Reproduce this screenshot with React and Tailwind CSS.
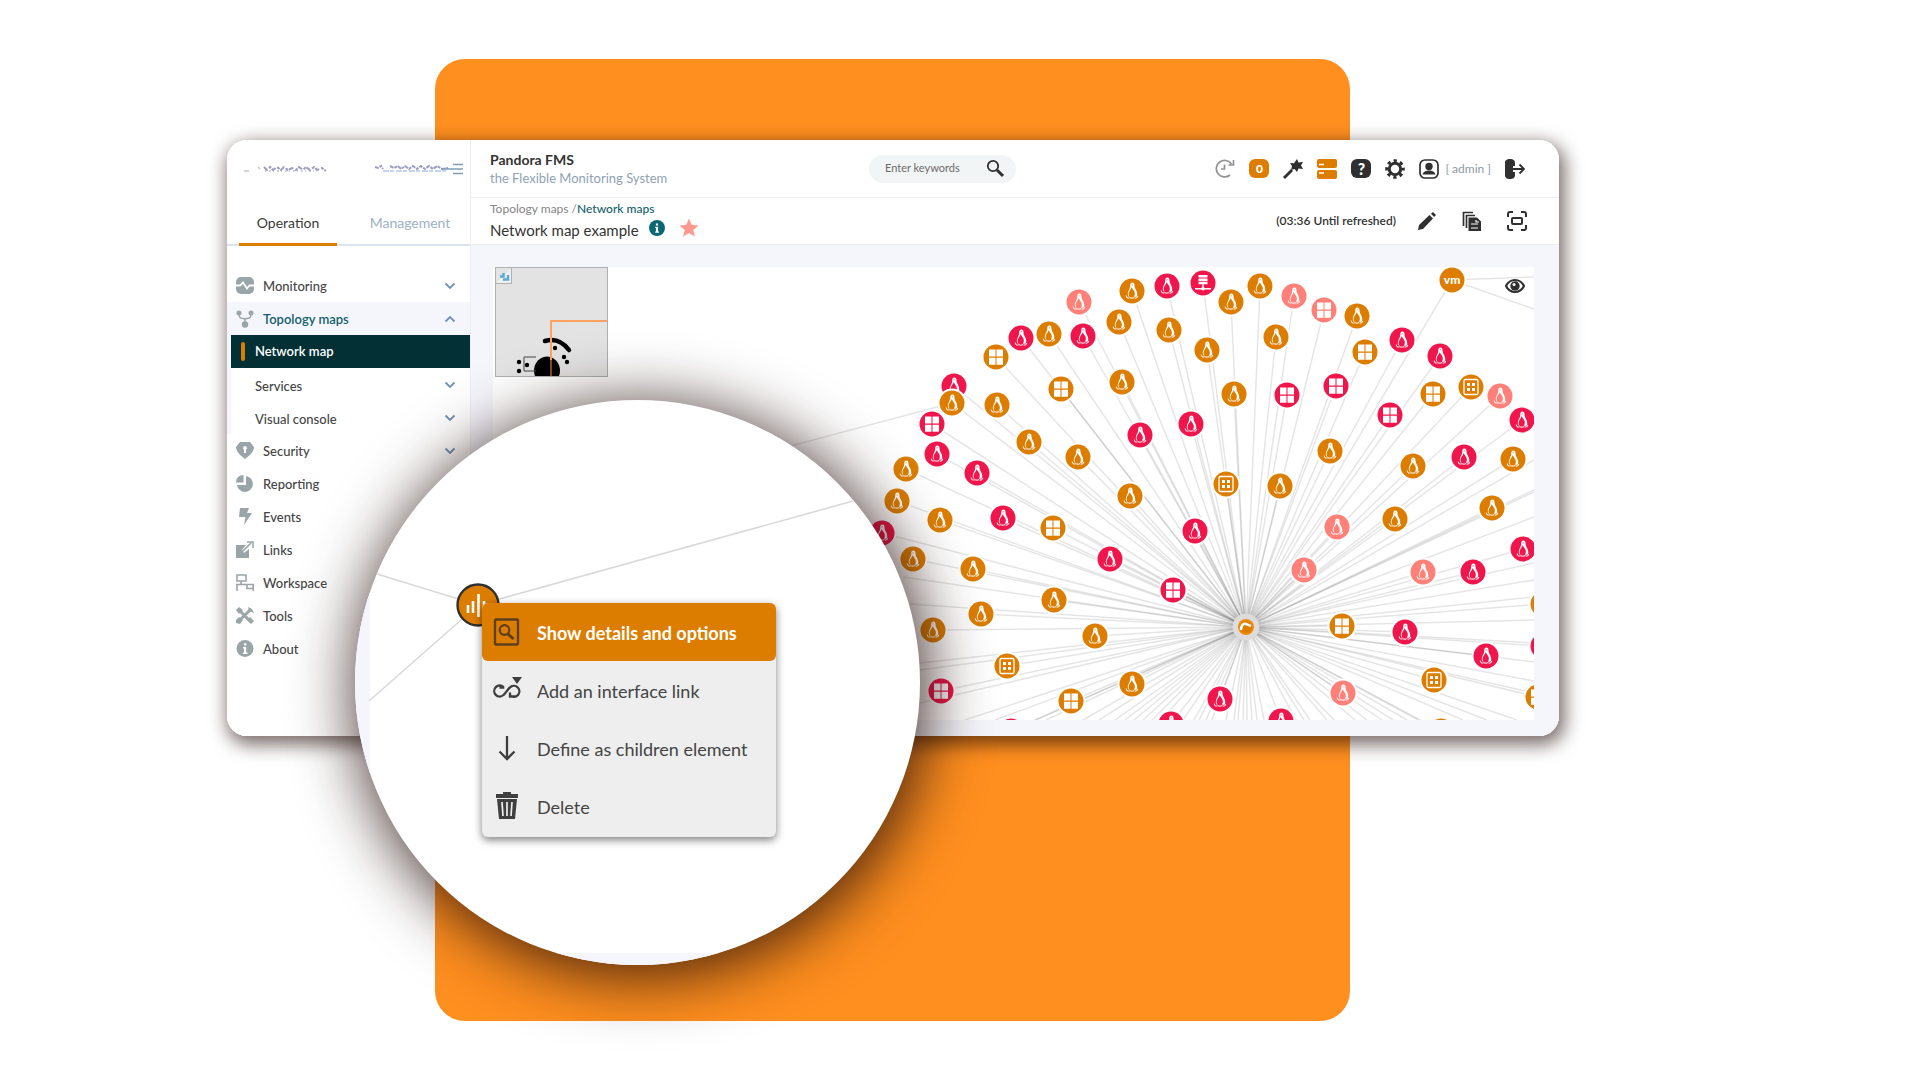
import React from "react";

const O = "#dc7d00";
const R = "#f0154a";
const P = "#ff8078";

/* Map nodes: x, y, colour, kind (p penguin, w windows, s switch, n network, v vm) */
const nodes = [
  [586, 35, P, "p"], [639, 24, O, "p"], [674, 19, R, "p"], [710, 16, R, "n"], [626, 55, O, "p"], [676, 63, O, "p"],
  [714, 83, O, "p"], [528, 71, R, "p"], [556, 67, O, "p"], [590, 69, R, "p"], [503, 90, O, "w"], [568, 122, O, "w"],
  [629, 115, O, "p"], [461, 119, R, "p"], [459, 136, O, "p"], [504, 138, O, "p"], [439, 157, R, "w"], [444, 187, R, "p"],
  [413, 202, O, "p"], [484, 206, R, "p"], [536, 175, O, "p"], [585, 190, O, "p"], [647, 168, R, "p"], [698, 157, R, "p"],
  [637, 229, O, "p"], [404, 234, O, "p"], [738, 35, O, "p"], [767, 19, O, "p"], [801, 29, P, "p"], [831, 43, P, "w"],
  [864, 49, O, "p"], [783, 70, O, "p"], [872, 85, O, "w"], [909, 73, R, "p"], [947, 89, R, "p"], [959, 13, O, "v"],
  [843, 119, R, "w"], [794, 128, R, "w"], [741, 127, O, "p"], [897, 148, R, "w"], [940, 127, O, "w"], [978, 120, O, "s"],
  [1007, 129, P, "p"], [1029, 153, R, "p"], [837, 184, O, "p"], [920, 199, O, "p"], [971, 190, R, "p"], [1020, 192, O, "p"],
  [787, 219, O, "p"], [733, 217, O, "s"], [447, 253, O, "p"], [389, 266, R, "p"], [420, 292, O, "p"], [480, 302, O, "p"],
  [510, 251, R, "p"], [560, 261, O, "w"], [617, 292, R, "p"], [702, 264, R, "p"], [680, 323, R, "w"], [561, 333, O, "p"],
  [488, 347, O, "p"], [440, 363, O, "p"], [602, 369, O, "p"], [514, 399, O, "s"], [448, 424, R, "w"], [578, 434, O, "w"],
  [639, 417, O, "p"], [727, 432, R, "p"], [678, 457, R, "p"], [518, 464, R, "p"], [844, 260, P, "p"], [811, 303, P, "p"],
  [902, 252, O, "p"], [999, 241, O, "p"], [930, 305, P, "p"], [980, 305, R, "p"], [1030, 282, R, "p"], [849, 359, O, "w"],
  [912, 365, R, "p"], [993, 389, R, "p"], [941, 413, O, "s"], [850, 426, P, "p"], [788, 454, R, "p"], [1050, 337, O, "p"],
  [1050, 379, R, "p"], [1045, 430, O, "w"], [948, 464, O, "p"],
];

/* Links that run on past the visible area */
const farLinks = [
  [410, 310], [417, 337], [427, 396], [427, 403], [427, 436], [472, 453], [502, 453], [542, 453], [553, 453], [590, 453],
  [606, 453], [622, 453], [632, 453], [641, 453], [650, 453], [659, 453], [668, 453], [690, 453], [701, 453], [706, 453],
  [713, 453], [719, 453], [733, 453], [741, 453], [745, 453], [750, 453], [754, 453], [759, 453], [764, 453], [771, 453],
  [803, 453], [811, 453], [817, 453], [834, 453], [841, 453], [862, 453], [874, 453], [889, 453], [900, 453], [914, 453],
  [925, 453], [970, 453], [994, 453], [1024, 453], [1041, 426], [1041, 414], [1041, 395], [1041, 376], [1041, 353],
  [1041, 330], [1041, 313], [1041, 296], [1041, 250], [1041, 225], [1041, 193], [1041, 223],
];

function Glyph({ kind, color }) {
  if (kind === "w")
    return <path fill="#fff" d="M-7-7.500h6.500v7H-7zM.5-7.500H7v7H.5zM-7 .8h6.500v7H-7zM.5.8H7v7H.5z" />;
  if (kind === "s")
    return (
      <g fill="#fff">
        <rect x="-7" y="-7.500" width="14" height="15" rx="1.500" fill="none" stroke="#fff" strokeWidth="1.300" />
        <path d="M-4-4h3v3h-3zM1-4h3v3H1zM-4 1h3v3h-3zM1 1h3v3H1z" />
      </g>
    );
  if (kind === "n")
    return (
      <g fill="#fff">
        <path d="M-4.500-8h9v2.600h-9zM-4.500-4.600h9V-2h-9zM-4.500-1.200h9v2.400h-9zM-.7 1h1.400v4H-.7zM-8 5H8v1.400H-8z" />
        <circle cy="5.700" r="1.800" />
      </g>
    );
  if (kind === "v")
    return (
      <text y="4" textAnchor="middle" fill="#fff" fontSize="12" fontWeight="900" fontFamily="Lato, sans-serif">
        vm
      </text>
    );
  return (
    <g>
      <path fill="#fff" d="M.3-8.500C2-8.500 2.600-7.200 2.500-5.500c0 2 1 3.500 2 5.500 1 2.200 1 4.400 0 5.800L-3.400 5.500C-4.600 3.500-4.400 1.500-3.200-.8-2-3-1.700-4-1.800-5.500-1.800-7.500-1-8.500.3-8.500Z" />
      <path fill={color} d="M-.2-4C.3-2.500 1-1.500 2-.2c1.200 2 1.200 4.400-.3 6.200h-3.900C-3.900 4-3.700 2-2.500 0-1.300-1.800-.6-2.700-.2-4Z" />
      <path fill={color} d="M-.3-6.800l1 .4-.8 1.400z" />
      <path d="M-2.600 6.500C-1 7.300.8 7.300 2.200 6.500M-5.800 4.500C-5.500 6.500-4.500 7.300-2.800 7M5.800 4.800C5.400 6.700 4.200 7.300 2.600 7" fill="none" stroke="#fff" strokeWidth="1.100" opacity=".85" />
    </g>
  );
}

function NetworkMap() {
  return (
    <svg className="block h-full w-full" role="img" aria-label="Network map">
      <g stroke="#000" strokeOpacity=".1" strokeWidth="1.500">
        {nodes.map(([x, y], i) => (
          <line key={i} x1={x} y1={y} x2="753" y2="360" />
        ))}
        {farLinks.map(([x, y], i) => (
          <line key={i} x1={x} y1={y} x2="753" y2="360" />
        ))}
        <line x1="459" y1="136" x2="290" y2="181" />
        <line x1="959" y1="13" x2="1041" y2="10" />
        <line x1="959" y1="13" x2="1041" y2="42" />
      </g>
      {nodes.map(([x, y, c, k], i) => (
        <g key={i} transform={`translate(${x} ${y})`}>
          <circle r="14.500" fill="#fff" />
          <circle r="12.500" fill={c} />
          <Glyph kind={k} color={c} />
        </g>
      ))}
      <circle cx="753" cy="360" r="13.500" fill="#dddbdb" />
      <circle cx="753" cy="360" r="8" fill="#f08a0c" />
      <circle cx="753" cy="360" r="6" fill={O} />
      <path d="M748 363c0-4 2-7 5-6s2 1 5 2" fill="none" stroke="#fff" strokeWidth="2.500" />
    </svg>
  );
}

function MiniMap() {
  return (
    <div className="absolute left-0.5 top-0 h-[110px] w-[113px] border border-[#b0b0b0] bg-[#e3e3e3]">
      <svg viewBox="0 0 111 108" className="block h-full w-full">
        <path d="M39 108a13 14 0 1 1 24 0z" fill="#000" />
        <path d="M40 89H28v14h12" stroke="#444" fill="none" />
        <path d="M49 73c10-3 18 1 24 9" stroke="#000" strokeWidth="4.500" strokeLinecap="round" fill="none" />
        <g fill="#000">
          <circle cx="23" cy="94" r="2.200" />
          <circle cx="23" cy="103" r="2.200" />
          <circle cx="31" cy="97" r="2.200" />
          <circle cx="59" cy="80" r="2.200" />
          <circle cx="68" cy="89" r="2.200" />
          <circle cx="71" cy="94" r="2.200" />
        </g>
        <path d="M55 92V53h56" stroke="#ffa261" strokeWidth="2" fill="none" />
        <path d="M55 92v16" stroke="#8a4a1c" strokeWidth="2" />
        <path d="M0 15.500h15.500V0" stroke="#b0b0b0" fill="#eef1f4" />
        <path d="M4 8.500h3.500V5M12 7v4.500H7" stroke="#5fa9d6" strokeWidth="2.500" fill="none" />
      </svg>
    </div>
  );
}

const sideIcons = {
  monitoring: (
    <>
      <rect x="0" y="0" width="18" height="17" rx="5" />
      <path d="M0 8.500h4l3-3 4 6 2.500-3H18" stroke="#fff" strokeWidth="1.800" fill="none" />
    </>
  ),
  topology: (
    <>
      <circle cx="3" cy="3" r="2.500" />
      <circle cx="15" cy="3" r="2.500" />
      <circle cx="9" cy="14.500" r="3.200" />
      <path d="M3 3c0 6 2 5 6 6 4-1 6 0 6-6M9 9v5" stroke="#9aa5aa" strokeWidth="1.500" fill="none" />
    </>
  ),
  security: (
    <>
      <path d="M4 0h10l4 5c0 5-5 9-9 12C5 14 0 10 0 5z" />
      <path d="M9 4a2 2 0 0 1 1 3.700V11H8V7.700A2 2 0 0 1 9 4z" fill="#fff" />
    </>
  ),
  reporting: (
    <>
      <path d="M10 1a8 8 0 1 1-9 9h9z" />
      <path d="M7.500 0v7.500H0C0 3 3 0 7.500 0z" />
    </>
  ),
  events: <path d="M4 0h9l-2 5h5L8 17l1.500-8H3z" />,
  links: (
    <>
      <path d="M0 4h10L6 9l2 3 5-4v9H0z" />
      <path d="M4 13l11-11M11 1h6v6" stroke="#9aa5aa" strokeWidth="1.600" fill="none" />
    </>
  ),
  workspace: (
    <g fill="none" stroke="#9aa5aa" strokeWidth="1.600">
      <path d="M1 1h9v6H1zM5 7v3M0 10.500h17.200V17M1 10v7M11 10.500v4h6" />
    </g>
  ),
  tools: (
    <>
      <path d="M3 3l12 12M15 2L3 14" stroke="#9aa5aa" strokeWidth="3" />
      <path d="M0 3l3-3 4 3-4 4zM12 0l1 4 5 2-2-4zM0 13l3-3 4 3-3 4-4-1zM11 13l3-3 4 4-3 3z" />
    </>
  ),
  about: (
    <>
      <circle cx="9" cy="8.500" r="8.500" />
      <path d="M7 7h3.200v5.500h1.300V14H6.800v-1.500H8v-4H7zM8 3.200h2.300v2.300H8z" fill="#fff" />
    </>
  ),
};

const menu = [
  { id: "monitoring", label: "Monitoring", chevron: "down" },
  { id: "topology", label: "Topology maps", chevron: "up", open: true },
  { id: "security", label: "Security", chevron: "down" },
  { id: "reporting", label: "Reporting" },
  { id: "events", label: "Events" },
  { id: "links", label: "Links" },
  { id: "workspace", label: "Workspace" },
  { id: "tools", label: "Tools" },
  { id: "about", label: "About" },
];

function Chevron({ dir }) {
  return (
    <svg width="12" height="8" viewBox="0 0 12 8" className="mr-[14px]" fill="none" stroke="#7391b5" strokeWidth="1.800">
      <path d={dir === "up" ? "M1.500 6.500L6 2l4.500 4.500" : "M1.500 1.500L6 6l4.500-4.500"} />
    </svg>
  );
}

function Sidebar() {
  return (
    <aside className="flex w-[244px] shrink-0 flex-col border-r border-[#eceef2] bg-white">
      <div className="flex h-[58px] items-center pl-4">
        <svg width="222" height="12" viewBox="0 0 222 12" role="img" aria-label="Logo">
          <g fill="none" stroke="#4a4f8c" opacity=".55">
            <path d="M1 8h5M15 4l2 2" stroke="#999" strokeWidth="1.500" />
            <path d="M21 4l3 3 3-3 3 3 4-3 4 3 3-3 4 3 4-2 4 2 3-3 4 3 3-3 4 3 4-3 3 3 5-2 4 3" strokeWidth="2" strokeDasharray="5 2 3 1" />
            <path d="M22 8h50" strokeWidth="1.500" strokeDasharray="1 3 2 2" opacity=".6" />
            <path d="M132 4l3 1 3-2 2 3M147 3l4 2 4-2 3 3 4-3 4 3 4-3 4 3 4-3 4 3 4-3 4 3 4-3 5 3 6-1" strokeWidth="2" strokeDasharray="4 1 3 1" />
            <path d="M140 8h64" stroke="#4d7fe0" strokeWidth="2" strokeDasharray="6 1 4 2" opacity=".6" />
          </g>
          <path d="M210 1.500h10M198 6h22M210 10.500h10" stroke="#7f9fb8" strokeWidth="1.600" />
        </svg>
      </div>
      <div role="tablist" className="flex h-[48px] border-b-2 border-[#dbe3ee] pl-3 text-[14px]">
        <button role="tab" aria-selected="true" className="-mb-0.5 w-[98px] border-b-[3px] border-[#dc7d00] pt-1 text-[#3a3a3a]">
          Operation
        </button>
        <button role="tab" aria-selected="false" className="ml-6 w-[98px] pt-0.5 text-[#9db1c6]">
          Management
        </button>
      </div>
      <nav className="mt-[23px] text-[13px] text-[#454545]">
        {menu.map((m) => (
          <React.Fragment key={m.id}>
            <a href="#" className={m.open ? "flex h-[33px] items-center bg-[#f5f6fc] pl-[9px] font-semibold text-[#14606b]" : "flex h-[33px] items-center pl-[9px] font-medium"}>
              <svg width="18" height="18" viewBox="0 0 18 18" fill="#9aa5aa">
                {sideIcons[m.id]}
              </svg>
              <span className="ml-[9px] flex-1 pt-0.5">{m.label}</span>
              {m.chevron && <Chevron dir={m.chevron} />}
            </a>
            {m.open && (
              <div className="border-l-4 border-[#f5f6fc] font-medium">
                <a href="#" className="flex h-[33px] items-center gap-2 bg-[#023035] pl-[10px] font-semibold text-white">
                  <span className="h-[19px] w-1 rounded-sm bg-[#dc7d00]" />
                  <span className="pl-0.5">Network map</span>
                </a>
                {["Services", "Visual console"].map((s) => (
                  <a key={s} href="#" className="flex h-[33px] items-center pl-6">
                    <span className="flex-1 pt-1">{s}</span>
                    <Chevron dir="down" />
                  </a>
                ))}
              </div>
            )}
          </React.Fragment>
        ))}
      </nav>
    </aside>
  );
}

function IconButton({ label, children }) {
  return (
    <button aria-label={label} className="flex size-5 items-center justify-center">
      <svg width="20" height="20" viewBox="0 0 20 20" fill="#303030" stroke="none">
        {children}
      </svg>
    </button>
  );
}

function Header() {
  return (
    <header className="flex h-[58px] items-center justify-between border-b border-[#eceef0] bg-white pl-[19px] pr-[34px]">
      <div className="flex items-center">
        <div className="w-[379px] text-[14px] leading-[19px]">
          <div className="font-bold text-[#333]">Pandora FMS</div>
          <div className="text-[13px] leading-[18px] text-[#90a2b5]">the Flexible Monitoring System</div>
        </div>
        <label className="flex h-7 w-[147px] items-center rounded-full bg-[#f1f5f6] pl-4">
          <input aria-label="Search" placeholder="Enter keywords" className="w-[100px] bg-transparent text-[11px] text-[#555] placeholder:text-[#6b6b6b] outline-none" />
          <svg width="20" height="20" viewBox="0 0 20 20" fill="none" stroke="#303030">
            <circle cx="8" cy="7" r="5.200" strokeWidth="1.800" />
            <path d="M12 11l6 6" strokeWidth="3" />
          </svg>
        </label>
      </div>
      <div className="flex items-center gap-[14px]">
        <IconButton label="Autorefresh">
          <path d="M15 16a8.300 8.300 0 1 1 1.500-11M18.500 1v5h-5M9.500 5.500V10H6" fill="none" stroke="#929292" strokeWidth="1.700" />
        </IconButton>
        <button className="h-[19px] w-5 rounded-md bg-[#dc7d00] text-[12px] leading-[19px] font-black text-white">0</button>
        <IconButton label="Wizard">
          <path d="M0 18l8-8 2 2-8 8zM14 0l1.500 3.500L20 3l-2 3.500L20 10l-4.500-.5L14 13l-2.500-3L8 11l1-4-2-3 4 .3z" />
        </IconButton>
        <IconButton label="Servers">
          <rect x="0" y="0" width="20" height="9" rx="2" fill="#dc7d00" />
          <rect x="0" y="11" width="20" height="9" rx="2" fill="#dc7d00" />
          <path d="M2 5.500h5M2 14h5" stroke="#fff" strokeWidth="1.400" />
        </IconButton>
        <button aria-label="Help" className="h-[19px] w-5 rounded-md bg-[#303030] text-[16px] leading-[19px] font-black text-white">?</button>
        <IconButton label="Setup">
          <circle cx="10" cy="10" r="5.700" fill="none" stroke="#303030" strokeWidth="3" />
          <circle cx="10" cy="10" r="8.300" fill="none" stroke="#303030" strokeWidth="3" strokeDasharray="3.260 3.260" strokeDashoffset="1.630" />
        </IconButton>
        <button className="flex items-center gap-1.5 text-[12px] whitespace-nowrap text-[#8b98a8]">
          <svg width="20" height="20" viewBox="0 0 20 20" fill="#303030">
            <rect x="1" y="1" width="18" height="18" rx="5" fill="none" stroke="#303030" strokeWidth="1.700" />
            <circle cx="10" cy="7.500" r="3.700" />
            <path d="M3.500 15.500c1-3 3-4 6.500-4s5.500 1 6.500 4z" />
          </svg>
          [ admin ]
        </button>
        <IconButton label="Logout">
          <path d="M5 0c3 0 5 1 5 4v3H8v6h2v3c0 3-2 4-5 4s-5-1-5-4V4c0-3 2-4 5-4z" />
          <path d="M8 10h11M14.500 5.500L19 10l-4.500 4.500" fill="none" stroke="#303030" strokeWidth="1.800" />
        </IconButton>
      </div>
    </header>
  );
}

function SubHeader() {
  return (
    <div className="flex h-[47px] items-center justify-between border-b border-[#eceef0] bg-white pl-[19px] pr-8">
      <div>
        <div className="text-[12px] leading-[18px] text-[#858585]">
          Topology maps /<a href="#" className="font-medium text-[#14606b]">Network maps</a>
        </div>
        <div className="flex items-center text-[15px] leading-6 text-[#333]">
          <h1>Network map example</h1>
          <svg width="16" height="16" viewBox="0 0 18 18" className="mb-1 ml-2.5">
            <circle cx="9" cy="9" r="9" fill="#0b6873" />
            <path d="M7 7.500h3.200V13h1v1.300H7V13h.8V9H7zM7.800 3.800h2.400v2.300H7.800z" fill="#fff" />
          </svg>
          <svg width="20" height="20" viewBox="0 0 20 20" className="mb-1 ml-3.5">
            <path d="M10 .5l2.700 6.300 6.800.6-5.200 4.500 1.600 6.700-5.900-3.600-5.900 3.600 1.600-6.700L.5 7.400l6.800-.6z" fill="#ff9a8f" />
          </svg>
        </div>
      </div>
      <div className="flex items-center gap-[25px] text-[12px] text-[#333]">
        <span className="-mr-1 font-semibold">(03:36 Until refreshed)</span>
        <IconButton label="Edit">
          <path d="M1 19l1-5L12.500 4 16 7.500 6 18zM14 2.800L16 1l3 3-1.800 2z" />
        </IconButton>
        <IconButton label="Node list">
          <path d="M1.500 15V1.500H11M4.500 17V4.500H13" fill="none" stroke="#303030" strokeWidth="1.700" />
          <path d="M6.500 6.500H15l4 4V20H6.500z" />
          <path d="M9 13h7M9 17h7M14 9v2h3" stroke="#fff" strokeWidth="1.200" fill="none" />
        </IconButton>
        <IconButton label="Full screen">
          <g fill="none" stroke="#303030" strokeWidth="2">
            <path d="M1 6V3q0-2 2-2h3M14 1h3q2 0 2 2v3M19 14v3q0 2-2 2h-3M6 19H3q-2 0-2-2v-3" />
            <rect x="5" y="7" width="10" height="6" rx="1" />
          </g>
        </IconButton>
      </div>
    </div>
  );
}

const actions = [
  {
    label: "Show details and options",
    icon: (
      <g fill="none" stroke="#5c3f1c">
        <rect x="3" y="1.500" width="23" height="25" rx="1" strokeWidth="2.300" />
        <circle cx="12.500" cy="12" r="4.800" strokeWidth="2.200" />
        <path d="M16 16l5.500 5" strokeWidth="3" />
      </g>
    ),
  },
  {
    label: "Add an interface link",
    icon: (
      <g fill="none" stroke="#3f3f3f" strokeWidth="2.300">
        <path d="M11.500 11A5.500 5.500 0 1 0 11.500 19C14 17 16 12.500 18.500 11A5.500 5.500 0 1 1 19 20M7.500 11.500h4.800M24 20.500h-6v-4" />
        <path d="M20 1h10l-5 7z" fill="#3f3f3f" stroke="none" />
      </g>
    ),
  },
  {
    label: "Define as children element",
    icon: <path d="M15 2v23M7.500 17.500L15 25l7.500-7.500" fill="none" stroke="#3f3f3f" strokeWidth="2.300" />,
  },
  {
    label: "Delete",
    icon: (
      <g fill="#3f3f3f">
        <path d="M4 2h7V0h8v2h7v4H4zM5 7h20l-2 20H7z" />
        <path d="M4 6.500h22" stroke="#eee" />
        <path d="M10 10l1 14M15 10v14M20 10l-1 14" stroke="#eee" strokeWidth="1.700" />
      </g>
    ),
  },
];

function Magnifier() {
  return (
    <div className="absolute left-[128px] top-[260px] size-[565px] rounded-full bg-white shadow-[4px_8px_62px_5px_rgba(35,15,10,0.82)]">
      <svg width="565" height="565" viewBox="0 0 565 565" className="block rounded-full">
        <path d="M0 180h15v385H0zM0 553h566v13H0z" fill="#f5f6fc" />
        <path d="M22 174l101 31L498 101M123 205L14 301" stroke="#d9d9d9" strokeWidth="1.600" fill="none" />
        <circle cx="123" cy="205" r="20.500" fill={O} stroke="#303030" strokeWidth="2.400" />
        <path d="M113 213v-8M118 213v-12M123.500 217v-23M129 213v-12" stroke="#fff" strokeWidth="2.600" />
      </svg>
      <div role="menu" className="absolute left-[127px] top-[203px] w-[294px] rounded-md bg-[#eee] pb-0.5 shadow-[0_3px_8px_rgba(0,0,0,0.5)]">
        {actions.map((a, i) => (
          <button
            key={a.label}
            role="menuitem"
            className={
              i === 0
                ? "flex h-[58px] w-full items-center gap-[15px] rounded-md bg-[#dc7d00] pl-[10px] text-left text-[18px] font-bold text-white"
                : "flex h-[58px] w-full items-center gap-[15px] pl-[10px] text-left text-[18px] text-[#444]"
            }
          >
            <svg width="30" height="28" viewBox="0 0 30 28" className="shrink-0">
              {a.icon}
            </svg>
            <span className="whitespace-nowrap pt-0.5">{a.label}</span>
          </button>
        ))}
      </div>
    </div>
  );
}

export default function App() {
  return (
    <main className="grid min-h-screen grid-cols-[227fr_208fr_915fr_209fr_361fr] grid-rows-[59px_81px_auto_285px_59px] bg-white font-['Lato',sans-serif]">
      <div className="col-start-3 row-start-2 row-end-5 rounded-[30px] bg-[#ff8f1f]" />
      <div className="relative col-start-2 col-end-5 row-start-3 flex min-h-[596px] rounded-[20px] shadow-[3px_6px_18px_3px_rgba(35,15,10,0.6)]">
        <div className="flex min-w-0 flex-1 overflow-hidden rounded-[20px] bg-white">
          <Sidebar />
          <section className="flex min-w-0 flex-1 flex-col bg-[#f5f6fc]">
            <Header />
            <SubHeader />
            <div className="relative mt-[22px] mr-[25px] mb-4 ml-[22px] flex-1 overflow-hidden bg-white">
              <div className="absolute inset-0">
                <NetworkMap />
              </div>
              <MiniMap />
              <button aria-label="Show labels" className="absolute right-[9px] top-2.5">
                <svg width="20" height="18" viewBox="0 0 20 18">
                  <path d="M1 9c4-8 14-8 18 0-4 8-14 8-18 0z" fill="#fff" stroke="#303030" strokeWidth="2.200" />
                  <circle cx="10" cy="9" r="4.700" fill="#303030" />
                  <circle cx="9" cy="7.500" r="1.500" fill="#fff" />
                </svg>
              </button>
            </div>
          </section>
        </div>
        <Magnifier />
      </div>
    </main>
  );
}
